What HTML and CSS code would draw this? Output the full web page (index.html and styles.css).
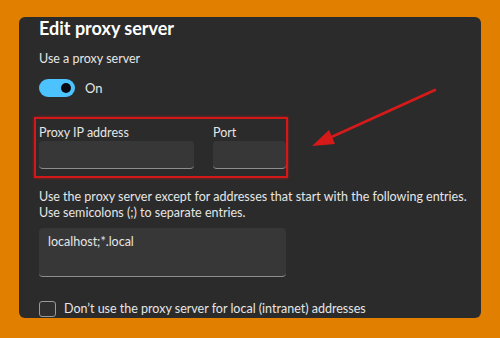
FILE: index.html
```html
<!DOCTYPE html>
<html lang="en">
<head>
    <meta charset="UTF-8">
    <meta name="viewport" content="width=device-width, initial-scale=1.0">
    <title>Edit proxy server</title>
    <link rel="stylesheet" href="styles.css">
</head>
<body>

    <div class="panel">
        <!-- header -->
        <h2 class="title">Edit proxy server</h2>

        <div class="useLabel">Use a proxy server</div>
        <div class="toggleRow">
            <span class="toggle"><span class="knob"></span></span>
            <span class="toggleText">On</span>
        </div>

        <!-- address / port, highlighted -->
        <div class="highlight">
            <div class="field">
                <div class="fieldLabel">Proxy IP address</div>
                <div class="input ipInput"></div>
            </div>
            <div class="field">
                <div class="fieldLabel">Port</div>
                <div class="input portInput"></div>
            </div>
        </div>

        <p class="desc">Use the proxy server except for addresses that start with the following entries.<br>Use semicolons (;) to separate entries.</p>

        <div class="input exceptions">localhost;*.local</div>

        <div class="checkRow">
            <span class="checkbox"></span>
            <span>Don’t use the proxy server for local (intranet) addresses</span>
        </div>
    </div>

    <!-- red arrow pointing at the box -->
    <svg class="arrow" width="500" height="338" viewBox="0 0 500 338">
        <line x1="435" y1="90" x2="326" y2="139.5" stroke="#d61a1a" stroke-width="2.6" stroke-linecap="round"/>
        <polygon points="312,146 329,130 335,144" fill="#d61a1a"/>
    </svg>

</body>
</html>
```

FILE: styles.css
```css
body{
    margin: 0;
    background-color: #e07f00;
    font-family: Lato, "Noto Sans", sans-serif;
    color: #e6e6e6;
}

.panel{
    margin: 18px 19px 0 19px;
    width: 462px;
    height: 301px;
    box-sizing: border-box;
    padding: 0 20px;
    background-color: #2b2b2b;
    border-radius: 6px;
}

.title{
    margin: -1px 0 0 0;
    font-size: 18px;
    line-height: 22px;
    font-weight: 700;
    color: #ffffff;
    white-space: nowrap;
}

.useLabel{
    margin-top: 12px;
    font-size: 12.5px;
    line-height: 16px;
    white-space: nowrap;
}

.toggleRow{
    margin-top: 12px;
    display: flex;
    align-items: center;
    gap: 10px;
    height: 18px;
    font-size: 13px;
}

.toggle{
    width: 36px;
    height: 18px;
    border-radius: 9px;
    background-color: #4cc2ff;
    display: flex;
    align-items: center;
    justify-content: flex-end;
    padding-right: 4px;
    box-sizing: border-box;
}

.knob{
    width: 10px;
    height: 10px;
    border-radius: 50%;
    background-color: #0a0a14;
}

.highlight{
    margin: 20px 0 0 -5px;
    width: 254px;
    height: 61px;
    box-sizing: border-box;
    border: 2px solid #d41818;
    box-shadow: 0 0 3px rgba(220, 20, 20, 0.6);
    padding: 6px 0 0 3px;
    display: flex;
    gap: 19px;
}

.fieldLabel{
    font-size: 12.5px;
    line-height: 16px;
    white-space: nowrap;
}

.input{
    background-color: #373737;
    border-bottom: 1px solid #8e8e8e;
    border-radius: 4px;
    box-sizing: border-box;
}

.ipInput{
    width: 155px;
    height: 28px;
}

.portInput{
    width: 73px;
    height: 28px;
}

.desc{
    margin: 11px 0 0 0;
    font-size: 12.5px;
    line-height: 16px;
    white-space: nowrap;
}

.exceptions{
    margin-top: 7px;
    width: 247px;
    height: 49px;
    padding: 6px 9px;
    font-size: 12.5px;
    line-height: 16px;
}

.checkRow{
    margin-top: 24px;
    display: flex;
    align-items: center;
    gap: 8px;
    font-size: 12.5px;
    line-height: 16px;
    white-space: nowrap;
}

.checkbox{
    width: 17px;
    height: 16px;
    box-sizing: border-box;
    border: 1px solid #9a9a9a;
    border-radius: 3px;
    background-color: #2f2f2f;
}

.arrow{
    position: absolute;
    left: 0;
    top: 0;
    pointer-events: none;
}
```
